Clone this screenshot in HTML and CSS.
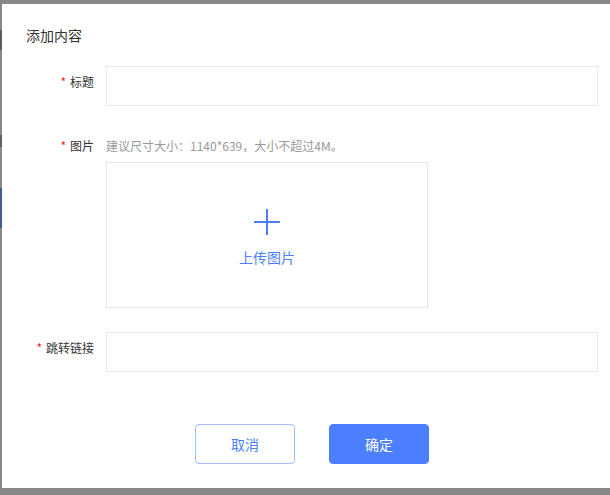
FILE: index.html
```html
<!DOCTYPE html>
<html lang="zh-CN">
<head>
<meta charset="utf-8">
<title>添加内容</title>
<link rel="stylesheet" href="styles.css">
</head>
<body>
<div class="page">
  <div class="modal">
    <div class="modal-header">添加内容</div>
    <form class="form">
      <div class="form-row">
        <label class="form-label required">标题</label>
        <div class="form-control"><input class="text-input" type="text"></div>
      </div>
      <div class="form-row">
        <label class="form-label required">图片</label>
        <div class="form-control">
          <div class="help">建议尺寸大小：1140*639，大小不超过4M。</div>
          <div class="upload">
            <svg class="plus" width="26" height="26" viewBox="0 0 26 26"><path d="M0 13H26M13 0V26" stroke="#4b7fff" stroke-width="2" fill="none"/></svg>
            <span class="upload-text">上传图片</span>
          </div>
        </div>
      </div>
      <div class="form-row last">
        <label class="form-label required">跳转链接</label>
        <div class="form-control"><input class="text-input" type="text"></div>
      </div>
    </form>
    <div class="footer">
      <button class="btn btn-default" type="button">取消</button>
      <button class="btn btn-primary" type="button">确定</button>
    </div>
  </div>
</div>
</body>
</html>
```

FILE: styles.css
```css
html, body {
  margin: 0;
  height: 100%;
  overflow: hidden;
}
body {
  font-family: "Microsoft YaHei", "Noto Sans CJK SC", sans-serif;
}
.page {
  height: 495px;
  box-sizing: border-box;
  padding: 4px 0 0 2px;
  background: linear-gradient(to bottom,
    #888 0 30px, #5c5c5c 30px 50px, #888 50px 135px,
    #626262 135px 147px, #888 147px 188px,
    #44599a 188px 228px, #888 228px);
}
.modal {
  width: 620px;
  height: 484px;
  background: #fff;
  box-sizing: border-box;
}
.modal-header {
  padding: 21px 24px;
  font-size: 14px;
  line-height: 20px;
  color: #333;
}
.form-row {
  display: flex;
  margin-bottom: 24px;
}
.form-row.last {
  margin-bottom: 0;
}
.form-label {
  flex-shrink: 0;
  width: 104px;
  box-sizing: border-box;
  padding-right: 12px;
  text-align: right;
  font-size: 12px;
  line-height: 32px;
  color: #333;
}
.required::before {
  content: "*";
  color: #f5222d;
  margin-right: 4px;
}
.text-input {
  display: block;
  width: 492px;
  height: 40px;
  box-sizing: border-box;
  border: 1px solid #e8e8e8;
  border-radius: 0;
  padding: 0 10px;
  outline: none;
  font-family: inherit;
}
.help {
  font-size: 12px;
  line-height: 32px;
  color: #999;
}
.upload {
  width: 322px;
  height: 146px;
  box-sizing: border-box;
  border: 1px solid #e5e5e5;
  display: flex;
  flex-direction: column;
  align-items: center;
  padding-top: 46px;
}
.plus {
  display: block;
}
.upload-text {
  margin-top: 12px;
  font-size: 14px;
  line-height: 20px;
  color: #4b7fff;
}
.footer {
  display: flex;
  justify-content: center;
  gap: 34px;
  padding-top: 52px;
}
.btn {
  width: 100px;
  height: 40px;
  box-sizing: border-box;
  border-radius: 4px;
  font-size: 14px;
  font-family: inherit;
  padding: 0;
  cursor: pointer;
}
.btn-default {
  background: #fff;
  border: 1px solid #a3bdff;
  color: #4b7fff;
}
.btn-primary {
  background: #4b7fff;
  border: 1px solid #4b7fff;
  color: #fff;
}
```
